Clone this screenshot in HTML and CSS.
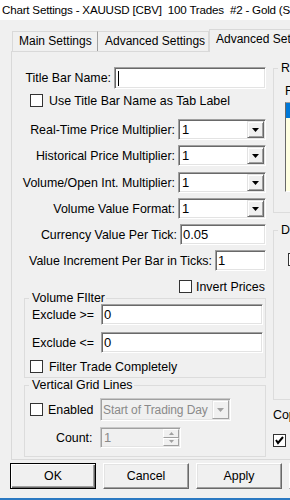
FILE: index.html
```html
<!DOCTYPE html>
<html lang="en">
<head>
    <meta charset="UTF-8">
    <meta name="viewport" content="width=device-width, initial-scale=1.0">
    <title>Chart Settings</title>
    <link rel="stylesheet" href="styles.css">
</head>
<body>
    <div class="titlebar">Chart Settings - XAUUSD [CBV]  100 Trades  #2 - Gold (S</div>

    <div class="tabs">
        <div class="tab tab-main">Main Settings</div>
        <div class="tab tab-adv">Advanced Settings</div>
        <div class="tab active">Advanced Settings 2</div>
    </div>

    <div class="panel">
        <div class="col-main">
            <div class="row row-title">
                <label>Title Bar Name:</label>
                <span class="edit w-title"><span class="caret"></span></span>
            </div>
            <div class="check-row row-uselabel"><span class="check"></span>Use Title Bar Name as Tab Label</div>

            <div class="row row-first">
                <label>Real-Time Price Multiplier:</label>
                <span class="combo"><span class="val">1</span><span class="drop"><svg width="7" height="4"><polygon points="0,0 7,0 3.5,4" fill="#000"/></svg></span></span>
            </div>
            <div class="row">
                <label>Historical Price Multiplier:</label>
                <span class="combo"><span class="val">1</span><span class="drop"><svg width="7" height="4"><polygon points="0,0 7,0 3.5,4" fill="#000"/></svg></span></span>
            </div>
            <div class="row row-loose">
                <label>Volume/Open Int. Multiplier:</label>
                <span class="combo"><span class="val">1</span><span class="drop"><svg width="7" height="4"><polygon points="0,0 7,0 3.5,4" fill="#000"/></svg></span></span>
            </div>
            <div class="row">
                <label>Volume Value Format:</label>
                <span class="combo"><span class="val">1</span><span class="drop"><svg width="7" height="4"><polygon points="0,0 7,0 3.5,4" fill="#000"/></svg></span></span>
            </div>
            <div class="row">
                <label>Currency Value Per Tick:</label>
                <span class="edit w-currency">0.05</span>
            </div>
            <div class="row">
                <label>Value Increment Per Bar in Ticks:</label>
                <span class="edit w-increment">1</span>
            </div>
            <div class="check-row row-invert"><span class="check"></span>Invert Prices</div>

            <fieldset class="group group-volume">
                <legend>Volume FIlter</legend>
                <div class="grow">
                    <label class="glabel">Exclude &gt;=</label>
                    <span class="edit w-exclude">0</span>
                </div>
                <div class="grow grow-next">
                    <label class="glabel">Exclude &lt;=</label>
                    <span class="edit w-exclude">0</span>
                </div>
                <div class="check-row row-filter"><span class="check"></span>Filter Trade Completely</div>
            </fieldset>

            <fieldset class="group group-grid">
                <legend>Vertical Grid Lines</legend>
                <div class="grow grow-enabled">
                    <span class="check"></span>
                    <label class="lbl-enabled">Enabled</label>
                    <span class="combo combo-off"><span class="val">Start of Trading Day</span><span class="drop"><svg width="7" height="4"><polygon points="0,0 7,0 3.5,4" fill="#a0a0a0"/></svg></span></span>
                </div>
                <div class="grow grow-count">
                    <label class="lbl-count">Count:</label>
                    <span class="spin"><span class="val">1</span><span class="spin-btns"><span class="spin-up"><svg width="5" height="3"><polygon points="0,3 5,3 2.5,0" fill="#a0a0a0"/></svg></span><span class="spin-down"><svg width="5" height="3"><polygon points="0,0 5,0 2.5,3" fill="#a0a0a0"/></svg></span></span></span>
                </div>
            </fieldset>
        </div>

        <div class="col-side">
            <fieldset class="side-group group-r">
                <legend>R</legend>
                <div class="side-label">F</div>
                <div class="listbox">
                    <div class="li sel"></div>
                    <div class="li"></div>
                    <div class="li"></div>
                    <div class="li"></div>
                    <div class="li"></div>
                </div>
            </fieldset>
            <fieldset class="side-group group-d">
                <legend>D</legend>
                <span class="check"></span>
            </fieldset>
            <div class="side-text">Cop</div>
            <span class="check checked"><svg width="11" height="11"><polyline points="2,5 4,8 9,2" fill="none" stroke="#000" stroke-width="2"/></svg></span>
        </div>
    </div>

    <div class="buttons">
        <button class="btn btn-default">OK</button>
        <button class="btn">Cancel</button>
        <button class="btn">Apply</button>
        <button class="btn">Help</button>
    </div>
    <div class="frame-edge"></div>
</body>
</html>
```

FILE: styles.css
```css
body {
    margin: 0;
    width: 290px;
    height: 500px;
    overflow: hidden;
    background-color: #f0f0f0;
    font-family: "Liberation Sans", Arial, sans-serif;
    font-size: 12.4px;
    color: #000;
}

.titlebar {
    height: 20px;
    line-height: 19px;
    padding-left: 2px;
    background-color: #fff;
    font-size: 11.6px;
    letter-spacing: -0.2px;
    white-space: pre;
    overflow: hidden;
}

/* tabs */
.tabs {
    display: flex;
    align-items: flex-end;
    height: 31px;
    padding-left: 12px;
    font-size: 12px;
}

.tab {
    flex: none;
    box-sizing: border-box;
    height: 20px;
    line-height: 19px;
    padding: 0 6px;
    border: 1px solid #d9d9d9;
    border-bottom: none;
    white-space: nowrap;
}

.tab-main {
    width: 86px;
    border-right: 1px solid #a0a0a0;
}

.tab-adv {
    width: 111px;
    border-left: none;
    padding-left: 7px;
}

.tab.active {
    height: 23px;
    line-height: 18px;
    margin-bottom: -1px;
    background-color: #f0f0f0;
    position: relative;
    z-index: 1;
}

/* panel */
.panel {
    display: flex;
    box-sizing: border-box;
    width: 300px;
    height: 409px;
    margin-left: 11px;
    border: 1px solid #d9d9d9;
}

.col-main {
    flex: none;
    width: 261px;
    padding-top: 15px;
}

.row {
    display: flex;
    justify-content: flex-end;
    align-items: center;
    gap: 3px;
    height: 21px;
    margin-top: 5px;
    padding-right: 7px;
}

.row-title { margin-top: 0; }
.row-first { margin-top: 12px; }
.row-loose { margin-top: 6px; }

label {
    white-space: nowrap;
}

.check-row {
    display: flex;
    align-items: center;
    height: 13px;
    white-space: nowrap;
}

.row-uselabel {
    margin-top: 6px;
    padding-left: 18px;
}

.row-invert {
    margin-top: 9px;
    padding-left: 167px;
}

.row-invert .check {
    margin-right: 4px;
}

.check {
    flex: none;
    display: inline-block;
    box-sizing: border-box;
    width: 13px;
    height: 13px;
    margin-right: 6px;
    border: 1px solid #333;
    background-color: #fff;
}

.check.checked {
    display: block;
    padding: 0;
}

.check svg {
    display: block;
}

/* text boxes */
.edit {
    flex: none;
    display: block;
    box-sizing: border-box;
    height: 21px;
    line-height: 19px;
    padding-left: 2px;
    border: 1px solid;
    border-color: #a0a0a0 #fff #fff #a0a0a0;
    box-shadow: inset 1px 1px 0 #696969, inset -1px -1px 0 #e3e3e3;
    background-color: #fff;
    font-size: 13px;
}

.w-title { width: 152px; height: 22px; position: relative; }
.w-currency { width: 86px; }
.w-increment { width: 51px; }
.w-exclude { width: 162px; }

.caret {
    position: absolute;
    left: 3px;
    top: 3px;
    width: 1px;
    height: 15px;
    background-color: #000;
}

/* combo boxes */
.combo {
    flex: none;
    display: flex;
    box-sizing: border-box;
    width: 88px;
    height: 21px;
    padding: 1px;
    border: 1px solid;
    border-color: #a0a0a0 #fff #fff #a0a0a0;
    box-shadow: inset 1px 1px 0 #696969, inset -1px -1px 0 #e3e3e3;
    background-color: #fff;
}

.combo .val {
    flex: 1;
    padding-left: 2px;
    line-height: 18px;
    font-size: 13px;
    overflow: hidden;
    white-space: nowrap;
}

.drop {
    flex: none;
    display: flex;
    align-items: center;
    justify-content: center;
    box-sizing: border-box;
    width: 17px;
    border: 1px solid;
    border-color: #e3e3e3 #696969 #696969 #e3e3e3;
    box-shadow: inset 1px 1px 0 #fff, inset -1px -1px 0 #a0a0a0;
    background-color: #f0f0f0;
}

.drop svg {
    display: block;
}

.combo-off {
    width: 131px;
    height: 23px;
    background-color: #f0f0f0;
    border-color: #c8c8c8 #fff #fff #c8c8c8;
    box-shadow: inset 1px 1px 0 #a0a0a0, inset -1px -1px 0 #e3e3e3;
    color: #8a8a8a;
}

.combo-off .val {
    padding-left: 1px;
    line-height: 20px;
    font-size: 12px;
    letter-spacing: -0.1px;
}

.combo-off .drop {
    border-color: #e3e3e3 #a0a0a0 #a0a0a0 #e3e3e3;
    box-shadow: inset 1px 1px 0 #fff;
}

/* group boxes */
.group {
    box-sizing: border-box;
    width: 242px;
    margin: 0 0 0 12px;
    padding: 0 2px 0 7px;
    border: 1px solid #dcdcdc;
}

.group legend {
    margin-left: -3px;
    padding: 0 1px 0 3px;
    line-height: 12px;
}

.group-volume {
    margin-top: -1px;
    padding-bottom: 4px;
}

.group-grid {
    margin-top: 1px;
    padding-bottom: 8px;
}

.grow {
    display: flex;
    align-items: center;
    height: 21px;
}

.grow-next {
    margin-top: 7px;
}

.glabel {
    width: 69px;
}

.row-filter {
    margin-top: 7px;
    margin-left: -2px;
}

.grow-enabled {
    height: 23px;
    margin-top: 7px;
    margin-left: -2px;
}

.grow-enabled .check {
    margin-right: 5px;
}

.lbl-enabled {
    width: 52px;
}

.grow-count {
    margin-top: 6px;
}

.lbl-count {
    width: 44px;
    padding-left: 24px;
}

.spin {
    flex: none;
    display: flex;
    box-sizing: border-box;
    width: 81px;
    height: 21px;
    padding: 1px;
    border: 1px solid;
    border-color: #c8c8c8 #fff #fff #c8c8c8;
    box-shadow: inset 1px 1px 0 #a0a0a0, inset -1px -1px 0 #e3e3e3;
    color: #8a8a8a;
}

.spin .val {
    flex: 1;
    padding-left: 2px;
    line-height: 18px;
    font-size: 13px;
}

.spin-btns {
    flex: none;
    display: flex;
    flex-direction: column;
    width: 16px;
}

.spin-up,
.spin-down {
    flex: 1;
    display: flex;
    align-items: center;
    justify-content: center;
    border: 1px solid;
    border-color: #fff #a0a0a0 #a0a0a0 #fff;
}

.spin svg {
    display: block;
}

/* right column */
.col-side {
    flex: none;
    width: 30px;
}

.side-group {
    box-sizing: border-box;
    width: 40px;
    margin: 0;
    padding: 0 0 0 11px;
    border: 1px solid #dcdcdc;
}

.side-group legend {
    margin-left: -7px;
    padding: 0 1px 0 3px;
    line-height: 12px;
}

.group-r {
    height: 151px;
    margin-top: 10px;
}

.side-label {
    margin-top: 10px;
    line-height: 14px;
}

.listbox {
    margin-top: 4px;
    height: 88px;
    border: 1px solid;
    border-color: #a0a0a0 #fff #fff #696969;
    background-color: #ffffe1;
}

.li {
    height: 15px;
}

.li.sel {
    background-color: #0078d7;
}

.group-d {
    height: 176px;
    margin-top: 11px;
}

.group-d .check {
    margin-top: 17px;
    margin-left: 3px;
}

.side-text {
    margin-top: 8px;
    line-height: 14px;
}

.col-side .check.checked {
    margin-top: 12px;
}

/* buttons */
.buttons {
    display: flex;
    gap: 7px;
    margin-top: 3px;
    padding-left: 10px;
}

.btn {
    flex: none;
    box-sizing: border-box;
    width: 86px;
    height: 26px;
    padding: 0;
    border: 1px solid;
    border-color: #fff #696969 #696969 #fff;
    box-shadow: inset -1px -1px 0 #a0a0a0, inset 1px 1px 0 #e3e3e3;
    background-color: #f0f0f0;
    font-family: "Liberation Sans", Arial, sans-serif;
    font-size: 12.4px;
    color: #000;
}

.btn-default {
    border: 1px solid #000;
    box-shadow: inset 1px 1px 0 #fff, inset -1px -1px 0 #696969, inset -2px -2px 0 #a0a0a0;
}

.frame-edge {
    height: 2px;
    margin-top: 9px;
    background-color: #2b79c2;
}
```
